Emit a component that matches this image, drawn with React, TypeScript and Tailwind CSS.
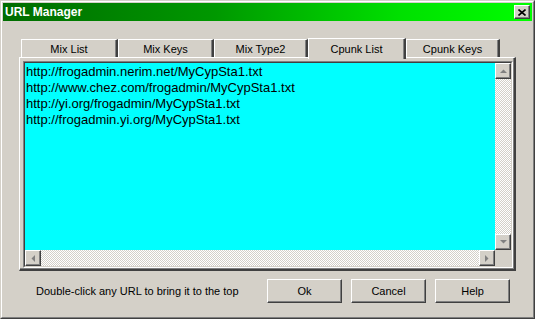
import type { ReactNode } from 'react';

const urls = [
  'http://frogadmin.nerim.net/MyCypSta1.txt',
  'http://www.chez.com/frogadmin/MyCypSta1.txt',
  'http://yi.org/frogadmin/MyCypSta1.txt',
  'http://frogadmin.yi.org/MyCypSta1.txt',
];

const tabs = [
  { label: 'Mix List', w: 'w-[97px]' },
  { label: 'Mix Keys', w: 'w-[96px]' },
  { label: 'Mix Type2', w: 'w-[94px]' },
  { label: 'Cpunk List', w: 'w-[98px]', active: true },
  { label: 'Cpunk Keys', w: 'w-[94px]' },
];

const raised =
  'border border-t-white border-l-white border-r-[#404040] border-b-[#404040] shadow-[inset_-1px_-1px_#808080] bg-[#d4d0c8]';

const dither = 'bg-[repeating-conic-gradient(#d4d0c8_0_25%,#ffffff_0_50%)] bg-[length:2px_2px]';

function Arrow({ dir }: { dir: 'up' | 'down' | 'left' | 'right' }) {
  const pts = {
    up: '0,4 7,4 3.5,0.5',
    down: '0,0 7,0 3.5,3.5',
    left: '4,0 4,7 0.5,3.5',
    right: '0,0 0,7 3.5,3.5',
  }[dir];
  const horiz = dir === 'left' || dir === 'right';
  return (
    <svg width={horiz ? 4 : 7} height={horiz ? 7 : 4} viewBox={horiz ? '0 0 4 7' : '0 0 7 4'}>
      <polygon points={pts} fill="#808080" />
    </svg>
  );
}

function ScrollBtn({ dir }: { dir: 'up' | 'down' | 'left' | 'right' }) {
  return (
    <div className={`${raised} w-[16px] h-[16px] shrink-0 flex items-center justify-center`}>
      <Arrow dir={dir} />
    </div>
  );
}

function Button({ children }: { children: ReactNode }) {
  return (
    <button
      className={`${raised} w-[75px] h-[24px] text-[11px] text-black flex items-center justify-center`}
    >
      {children}
    </button>
  );
}

export default function App() {
  return (
    <div
      className="w-[535px] h-[319px] bg-[#d4d0c8] border border-t-[#d4d0c8] border-l-[#d4d0c8] border-r-[#404040] border-b-[#404040] text-black"
      style={{ fontFamily: '"Liberation Sans", Arial, sans-serif' }}
    >
      <div className="h-full border border-t-white border-l-white border-r-[#808080] border-b-[#808080] p-[1px] flex flex-col">
        {/* title bar */}
        <div className="h-[18px] shrink-0 bg-[linear-gradient(to_right,#006c00,#009800_40%,#00e000_75%,#00ff00)] flex items-center pl-[2px] pr-[2px]">
          <span className="text-white font-bold text-[12px] flex-1 leading-none">URL Manager</span>
          <div className={`${raised} w-[16px] h-[14px] flex items-center justify-center`}>
            <svg width="8" height="7" viewBox="0 0 8 7">
              <path d="M0.5 0.5 L7.5 6.5 M7.5 0.5 L0.5 6.5" stroke="#000" strokeWidth="1.6" />
            </svg>
          </div>
        </div>

        {/* tab strip */}
        <div className="ml-[16px] mt-[16px] w-[497px] flex flex-col">
          <div className="h-[20px] pl-[2px] flex items-end">
            {tabs.map((t) =>
              t.active ? (
                <div
                  key={t.label}
                  className={`${t.w} h-[21px] -mb-[2px] relative z-10 bg-[#d4d0c8] border-t border-l border-t-white border-l-white border-r-2 border-r-[#404040] shadow-[inset_-1px_0_#808080] flex items-start justify-center pt-[2px] text-[11px]`}
                >
                  {t.label}
                </div>
              ) : (
                <div
                  key={t.label}
                  className={`${t.w} h-[18px] bg-[#d4d0c8] border-t border-l border-t-white border-l-white border-r-2 border-r-[#404040] shadow-[inset_-1px_0_#808080] flex items-center justify-center pt-[1px] text-[11px]`}
                >
                  {t.label}
                </div>
              ),
            )}
          </div>

          {/* panel */}
          <div className="h-[214px] border-t border-l border-t-white border-l-white border-r-2 border-b-2 border-r-[#404040] border-b-[#404040] shadow-[inset_-1px_-1px_#808080] pl-[3px] pt-[3px] pr-[1px] pb-[1px] flex">
            <div className="flex-1 border border-t-[#808080] border-l-[#808080] border-r-white border-b-white flex">
              <div className="flex-1 border border-t-[#404040] border-l-[#404040] border-r-[#d4d0c8] border-b-[#d4d0c8] grid grid-cols-[1fr_16px] grid-rows-[1fr_16px]">
                <div className="bg-[#00ffff] pl-[1px] pt-[1px] text-[13px] leading-[16px]">
                  {urls.map((u) => (
                    <div key={u}>{u}</div>
                  ))}
                </div>
                <div className="flex flex-col">
                  <ScrollBtn dir="up" />
                  <div className={`flex-1 ${dither}`} />
                  <ScrollBtn dir="down" />
                </div>
                <div className="flex">
                  <ScrollBtn dir="left" />
                  <div className={`flex-1 ${dither}`} />
                  <ScrollBtn dir="right" />
                </div>
                <div className="bg-[#d4d0c8]" />
              </div>
            </div>
          </div>
        </div>

        {/* bottom row */}
        <div className="mt-[8px] flex items-center">
          <div className="ml-[33px] flex-1 text-[11px]">Double-click any URL to bring it to the top</div>
          <div className="flex gap-[9px] mr-[22px]">
            <Button>Ok</Button>
            <Button>Cancel</Button>
            <Button>Help</Button>
          </div>
        </div>
      </div>
    </div>
  );
}
